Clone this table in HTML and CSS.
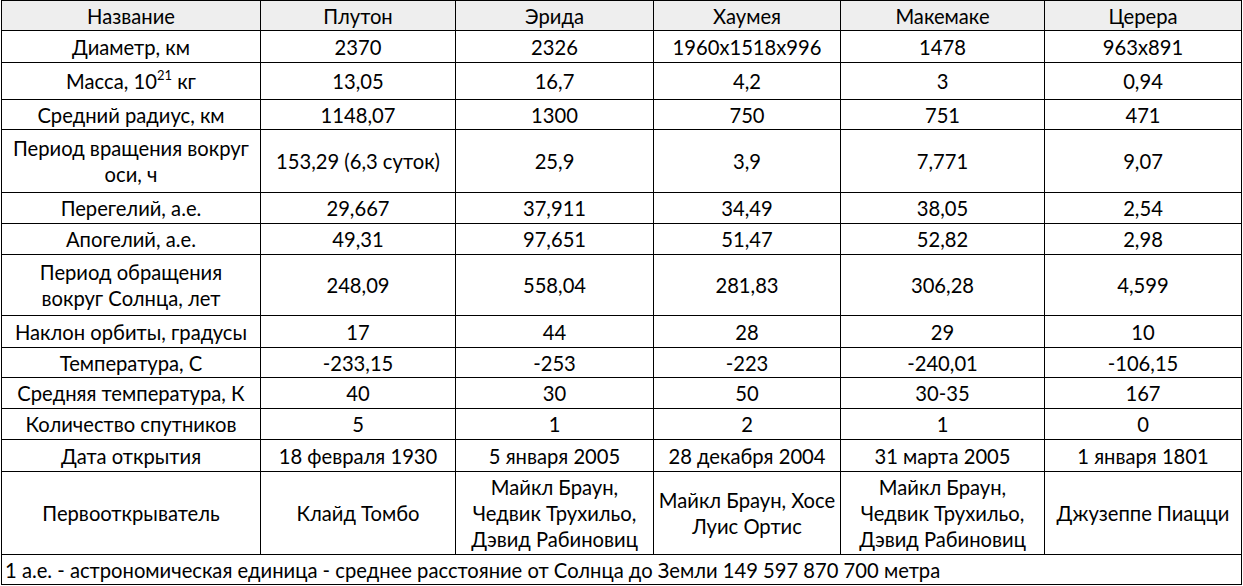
FILE: index.html
```html
<!DOCTYPE html>
<html lang="ru">
<head>
<meta charset="utf-8">
<title>Карликовые планеты</title>
<link rel="stylesheet" href="styles.css">
</head>
<body>
<table class="sheet">
  <colgroup>
    <col class="c-name"><col class="c-pluto"><col class="c-eris"><col class="c-haumea"><col class="c-make"><col class="c-ceres">
  </colgroup>
  <tr class="head r30"><td>Название</td><td>Плутон</td><td>Эрида</td><td>Хаумея</td><td>Макемаке</td><td>Церера</td></tr>
  <tr class="r32"><td>Диаметр, км</td><td>2370</td><td>2326</td><td>1960x1518x996</td><td>1478</td><td>963x891</td></tr>
  <tr class="r37"><td>Масса, 10<sup>21</sup> кг</td><td>13,05</td><td>16,7</td><td>4,2</td><td>3</td><td>0,94</td></tr>
  <tr class="r30"><td>Средний радиус, км</td><td>1148,07</td><td>1300</td><td>750</td><td>751</td><td>471</td></tr>
  <tr class="r63"><td>Период вращения вокруг<br>оси, ч</td><td>153,29 (6,3 суток)</td><td>25,9</td><td>3,9</td><td>7,771</td><td>9,07</td></tr>
  <tr class="r31"><td>Перегелий, а.е.</td><td>29,667</td><td>37,911</td><td>34,49</td><td>38,05</td><td>2,54</td></tr>
  <tr class="r31"><td>Апогелий, а.е.</td><td>49,31</td><td>97,651</td><td>51,47</td><td>52,82</td><td>2,98</td></tr>
  <tr class="r61"><td>Период обращения<br>вокруг Солнца, лет</td><td>248,09</td><td>558,04</td><td>281,83</td><td>306,28</td><td>4,599</td></tr>
  <tr class="r32"><td>Наклон орбиты, градусы</td><td>17</td><td>44</td><td>28</td><td>29</td><td>10</td></tr>
  <tr class="r30"><td>Температура, С</td><td>-233,15</td><td>-253</td><td>-223</td><td>-240,01</td><td>-106,15</td></tr>
  <tr class="r31"><td>Средняя температура, К</td><td>40</td><td>30</td><td>50</td><td>30-35</td><td>167</td></tr>
  <tr class="r31"><td>Количество спутников</td><td>5</td><td>1</td><td>2</td><td>1</td><td>0</td></tr>
  <tr class="r32"><td>Дата открытия</td><td>18 февраля 1930</td><td>5 января 2005</td><td>28 декабря 2004</td><td>31 марта 2005</td><td>1 января 1801</td></tr>
  <tr class="r83"><td>Первооткрыватель</td><td>Клайд Томбо</td><td>Майкл Браун,<br>Чедвик Трухильо,<br>Дэвид Рабиновиц</td><td>Майкл Браун, Хосе<br>Луис Ортис</td><td>Майкл Браун,<br>Чедвик Трухильо,<br>Дэвид Рабиновиц</td><td>Джузеппе Пиацци</td></tr>
  <tr class="r30 note"><td colspan="6">1 а.е. - астрономическая единица - среднее расстояние от Солнца до Земли 149 597 870 700 метра</td></tr>
</table>
</body>
</html>
```

FILE: styles.css
```css
html, body {
  margin: 0;
  padding: 0;
  background: #ffffff;
}

.sheet {
  margin: 0 0 0 1px;
  border-collapse: collapse;
  table-layout: fixed;
  width: 1240px;
  font-family: Lato, "Liberation Sans", sans-serif;
  font-size: 20.2px;
  color: #000000;
}

.c-name { width: 259px; }
.c-pluto { width: 195px; }
.c-eris { width: 198px; }
.c-haumea { width: 187px; }
.c-make { width: 204px; }
.c-ceres { width: 197px; }

.sheet td {
  border: 1px solid #000000;
  padding: 0 1px;
  text-align: center;
  vertical-align: middle;
  line-height: 26px;
  white-space: nowrap;
  overflow: hidden;
}

.sheet sup {
  font-size: 13px;
  line-height: 0;
  vertical-align: 9px;
}

.head td {
  background: #eeeeee;
}

.note td {
  text-align: left;
  padding-left: 3px;
}

.r30 { height: 30px; }
.r31 { height: 31px; }
.r32 { height: 32px; }
.r37 { height: 37px; }
.r61 { height: 61px; }
.r63 { height: 63px; }
.r83 { height: 83px; }
```
